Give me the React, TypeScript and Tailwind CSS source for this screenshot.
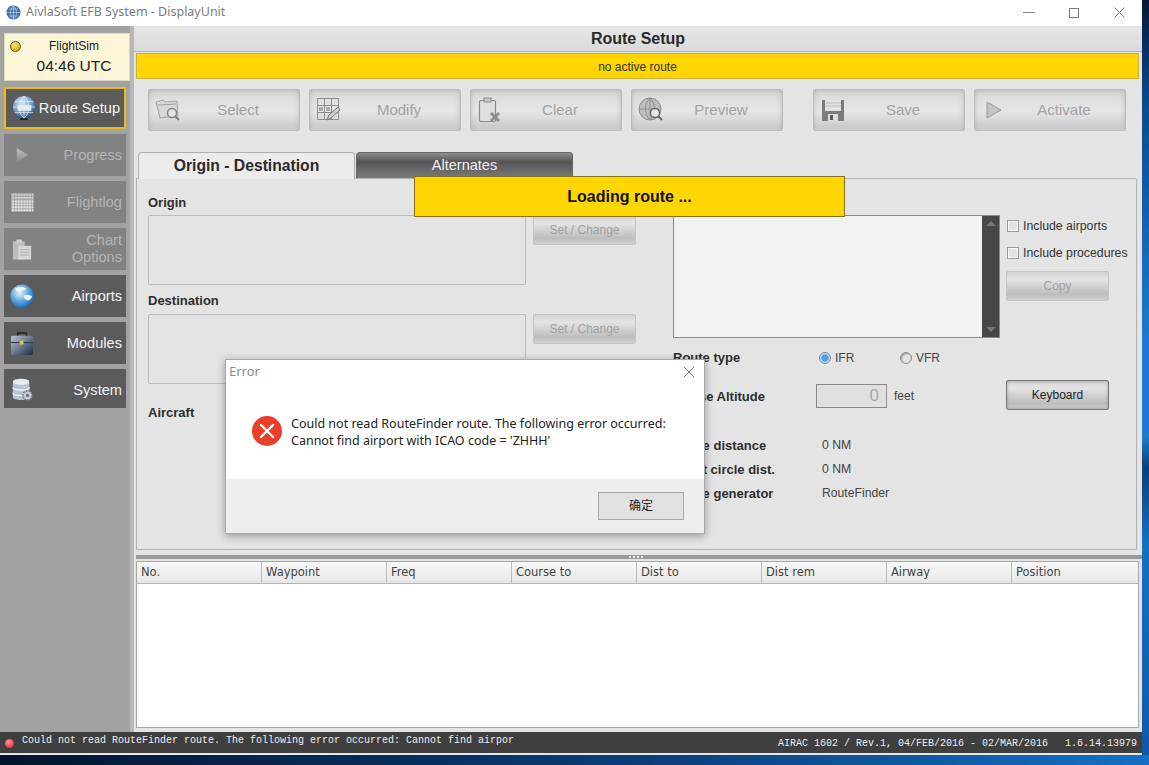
const uiFont = "[font-family:'Liberation_Sans',Arial,sans-serif]";

function RouteGlobe() {
  return (
    <svg width="24" height="26" viewBox="0 0 26 28">
      <defs>
        <radialGradient id="rg" cx="40%" cy="30%" r="75%">
          <stop offset="0" stopColor="#d8e8f5" />
          <stop offset="0.6" stopColor="#6f9cc6" />
          <stop offset="1" stopColor="#1f4a78" />
        </radialGradient>
      </defs>
      <circle cx="13" cy="13" r="12" fill="url(#rg)" />
      <path d="M1 13h24M13 1v24M3 7h20M3 19h20M13 1c-7 6-7 18 0 24M13 1c7 6 7 18 0 24" stroke="#e6eef6" strokeWidth="0.8" fill="none" />
      <rect x="6" y="11" width="15" height="6" fill="#eef3f8" opacity="0.85" />
      <rect x="9" y="25" width="8" height="2" fill="#222" />
    </svg>
  );
}

function PlayIcon() {
  return (
    <svg width="13" height="16" viewBox="0 0 16 18" preserveAspectRatio="none">
      <defs>
        <linearGradient id="pl" x1="0" y1="0" x2="0" y2="1">
          <stop offset="0" stopColor="#bdbdbd" />
          <stop offset="1" stopColor="#8c8c8c" />
        </linearGradient>
      </defs>
      <path d="M1 1l14 8-14 8z" fill="url(#pl)" />
    </svg>
  );
}

function KeysIcon() {
  return (
    <svg width="23" height="19" viewBox="0 0 24 20">
      <rect width="24" height="20" fill="#a9a9a9" />
      <path d="M1 2h22M1 5h22" stroke="#dcdcdc" strokeWidth="1.4" strokeDasharray="2 1" />
      <path d="M1 9h22M1 12h22M1 15h22M1 18h22" stroke="#e8e8e8" strokeWidth="2" strokeDasharray="2 1" />
    </svg>
  );
}

function ChartIcon() {
  return (
    <svg width="20" height="23" viewBox="0 0 22 24">
      <rect x="1" y="3" width="13" height="20" fill="#bdbdbd" />
      <rect x="7" y="8" width="14" height="15" fill="#d8d8d8" />
      <rect x="5" y="1" width="6" height="4" fill="#cfcfcf" />
      <path d="M9 12h10M9 15h10M9 18h10" stroke="#aaa" />
    </svg>
  );
}

function EarthIcon() {
  return (
    <svg width="24" height="24" viewBox="0 0 25 25">
      <defs>
        <radialGradient id="ea" cx="40%" cy="35%" r="70%">
          <stop offset="0" stopColor="#e8f4fc" />
          <stop offset="0.55" stopColor="#5ea8e2" />
          <stop offset="1" stopColor="#1865b4" />
        </radialGradient>
      </defs>
      <circle cx="12.5" cy="12.5" r="12" fill="url(#ea)" />
      <path d="M5 5c4-3 9-3 12 0-2 2-4 1-6 3-2 1-4 0-6-3zM14 12c3-1 7-1 9 1-1 3-3 4-5 4-2-1-4-3-4-5z" fill="#f2f5f2" />
    </svg>
  );
}

function CaseIcon() {
  return (
    <svg width="24" height="25" viewBox="0 0 25 26">
      <defs>
        <linearGradient id="cs" x1="0" y1="0" x2="1" y2="1">
          <stop offset="0" stopColor="#b9c4d4" />
          <stop offset="1" stopColor="#1f2c48" />
        </linearGradient>
      </defs>
      <path d="M8 5V2h9v3" stroke="#222" strokeWidth="1.5" fill="none" />
      <rect x="1" y="5" width="23" height="20" rx="2" fill="url(#cs)" />
      <path d="M1 12h23" stroke="#2a3550" />
      <rect x="10" y="10" width="4" height="4" fill="#d9c54a" />
    </svg>
  );
}

function DbIcon() {
  return (
    <svg width="22" height="24" viewBox="0 0 24 26">
      <path d="M2 4v17c0 4 18 4 18 0V4z" fill="#b7c4d2" />
      <ellipse cx="11" cy="4" rx="9" ry="3.4" fill="#e6ecf2" />
      <path d="M2 10c0 4 18 4 18 0M2 16c0 4 18 4 18 0" stroke="#f2f5f8" strokeWidth="1.4" fill="none" />
      <circle cx="18" cy="19" r="5" fill="#c5cdd6" stroke="#6d7884" strokeWidth="1.6" strokeDasharray="2 1" />
      <circle cx="18" cy="19" r="1.8" fill="#6d7884" />
    </svg>
  );
}

function FolderSearch() {
  return (
    <svg width="26" height="24" viewBox="0 0 26 24" fill="none" stroke="#a0a0a0">
      <path d="M1 4l7-2 2 2 12-1 1 15-18 2z" fill="#d8d8d8" />
      <path d="M3 7l18-1" />
      <circle cx="17" cy="15" r="4.5" fill="#e4e4e4" strokeWidth="1.4" stroke="#808080" />
      <path d="M20 18l4 4" strokeWidth="2" stroke="#808080" />
    </svg>
  );
}

function GridPencil() {
  return (
    <svg width="24" height="24" viewBox="0 0 24 24" fill="none" stroke="#8e8e8e">
      <path d="M.5.5h21v21H.5zM7.5.5v21M14.5.5v21M.5 7.5h21M.5 14.5h21" />
      <rect x="2" y="9" width="4" height="4" fill="#aaa" stroke="none" />
      <rect x="9" y="9" width="4" height="4" fill="#aaa" stroke="none" />
      <path d="M10 22l2-5 9-8 2 3-9 8z" fill="#cfcfcf" stroke="#777" />
    </svg>
  );
}

function ClipX() {
  return (
    <svg width="24" height="26" viewBox="0 0 24 26" fill="none" stroke="#8a8a8a">
      <rect x="1.5" y="3.5" width="16" height="21" rx="1.5" fill="#dedede" strokeWidth="1.2" />
      <rect x="6" y="1" width="7" height="4" fill="#c8c8c8" />
      <path d="M13 16l8 8M21 16l-8 8" stroke="#8f8f8f" strokeWidth="3" />
    </svg>
  );
}

function GlobeSearch() {
  return (
    <svg width="26" height="26" viewBox="0 0 26 26" fill="none">
      <circle cx="12" cy="12" r="11" fill="#bdbdbd" stroke="#8c8c8c" />
      <path d="M1 12h22M12 1v22M12 1c-6 6-6 16 0 22M12 1c6 6 6 16 0 22" stroke="#888" strokeWidth="0.8" />
      <circle cx="17" cy="16" r="4.5" fill="#e8e8e8" stroke="#666" strokeWidth="1.4" />
      <path d="M20 19l4 4" stroke="#666" strokeWidth="2" />
    </svg>
  );
}

function Floppy() {
  return (
    <svg width="22" height="22" viewBox="0 0 22 22">
      <path d="M0 1h22v21H0z" fill="#7c7c7c" />
      <rect x="3" y="1" width="16" height="11" fill="#e2e2e2" />
      <path d="M3 4h16M3 7h16" stroke="#bbb" />
      <rect x="6" y="15" width="10" height="7" fill="#dedede" />
      <rect x="8" y="16" width="3" height="5" fill="#555" />
    </svg>
  );
}

function PlayOutline() {
  return (
    <svg width="16" height="18" viewBox="0 0 16 18">
      <path d="M1 1l14 8-14 8z" fill="#c4c4c4" stroke="#9a9a9a" />
    </svg>
  );
}

function NavItem({ icon, label, enabled, active, h = "h-[42px]", extra = "" }: { icon: React.ReactNode; label: React.ReactNode; enabled?: boolean; active?: boolean; h?: string; extra?: string }) {
  return (
    <div className={`${h} w-[122px] flex items-center justify-between pl-[6px] pr-[4px] text-[14.6px] leading-[17px] text-right ${enabled ? "bg-[#5b5b5b] text-[#f4f4f4]" : "bg-[#828282] text-[#b4b4b4]"} ${active ? "border-[2px] border-[#e6bb1e] pl-[4px] pr-[2px]" : ""} ${extra}`}>
      <div className="w-[24px] flex justify-center">{icon}</div>
      <div className="whitespace-nowrap">{label}</div>
    </div>
  );
}

function Sidebar() {
  return (
    <div className="w-[134px] shrink-0 bg-[#a2a2a2] pl-[4px] pt-[7px] flex flex-col gap-[5px] border-r-[4px] border-[#b8b8b8]">
      <div className="relative h-[48px] w-[126px] bg-[#fdf5d8] mb-[1px] flex flex-col items-center pl-[14px] text-[#222] border border-[#dcd7c0]">
        <div className="absolute left-[5px] top-[7px] w-[11px] h-[11px] rounded-full bg-[radial-gradient(circle_at_40%_35%,#f8e870,#b89a10)] border border-[#6b5a10]" />
        <div className="text-[12px] leading-[14px] mt-[5px]">FlightSim</div>
        <div className="text-[15.5px] leading-[20px] mt-[3px]">04:46 UTC</div>
      </div>
      <NavItem icon={<RouteGlobe />} label="Route Setup" enabled active />
      <NavItem icon={<PlayIcon />} label="Progress" />
      <NavItem icon={<KeysIcon />} label="Flightlog" />
      <NavItem icon={<ChartIcon />} label={<>Chart<br />Options</>} />
      <NavItem icon={<EarthIcon />} label="Airports" enabled />
      <NavItem icon={<CaseIcon />} label="Modules" enabled />
      <NavItem icon={<DbIcon />} label="System" enabled h="h-[39px]" extra="pt-[3px]" />
    </div>
  );
}

function ToolButton({ icon, label }: { icon: React.ReactNode; label: string }) {
  return (
    <div className="w-[152px] h-[42px] flex items-center pl-[6px] rounded-[2px] border border-[#bcbcbc] bg-[linear-gradient(180deg,#d2d2d2_0%,#dedede_20%,#e6e6e6_50%,#dcdcdc_70%,#cecece_90%,#dadada_100%)] shadow-[inset_0_0_5px_rgba(140,140,140,0.45)]">
      <div className="w-[26px] flex justify-center">{icon}</div>
      <div className="flex-1 text-center pr-[4px] text-[15px] text-[#a2a2a2]">{label}</div>
    </div>
  );
}

function SmallButton({ label, dark, className = "" }: { label: string; dark?: boolean; className?: string }) {
  return (
    <div className={`w-[103px] h-[30px] flex items-center justify-center rounded-[2px] text-[12px] bg-[linear-gradient(180deg,#d2d2d2_0%,#e4e4e4_25%,#bdbdbd_80%,#cfcfcf_100%)] ${dark ? "border border-[#777] text-[#222] shadow-[inset_0_0_3px_rgba(90,90,90,0.5)]" : "border border-[#c4c4c4] text-[#a2a2a2]"} ${className}`}>
      {label}
    </div>
  );
}

function Check({ label }: { label: string }) {
  return (
    <div className="flex items-center gap-[4px] text-[12.3px] text-[#333] h-[14px]">
      <div className="w-[12px] h-[12px] border border-[#9a9a9a] bg-[#e2e2e2] shadow-[inset_0_0_0_1px_#f6f6f6]" />
      <span className="whitespace-nowrap">{label}</span>
    </div>
  );
}

function Radio({ label, on }: { label: string; on?: boolean }) {
  return (
    <div className="flex items-center gap-[4px] text-[12px] text-[#444]">
      <div className={`w-[12px] h-[12px] rounded-full border border-[#888] ${on ? "bg-[radial-gradient(circle,#4aa3e8_45%,#bcdcf5_60%)]" : "bg-[#e2e2e2] shadow-[inset_1px_1px_1px_#999]"}`} />
      <span>{label}</span>
    </div>
  );
}

function Label({ children, className = "" }: { children: React.ReactNode; className?: string }) {
  return <div className={`text-[13px] leading-[16px] font-bold text-[#2e2e2e] pt-[1px] -mb-[1px] ${className}`}>{children}</div>;
}

function InfoRow({ label, value }: { label: string; value: string }) {
  return (
    <div className="flex items-center h-[24px]">
      <Label className="w-[149px]">{label}</Label>
      <div className="text-[12.2px] text-[#444]">{value}</div>
    </div>
  );
}

function RoutePanel() {
  return (
    <div className="h-[372px] ml-[2px] mr-[5px] border border-[#b0b0b0] bg-[#e4e4e4] rounded-tr-[2px] flex pl-[11px] pr-[8px]">
      <div className="w-[488px] shrink-0 pt-[15px]">
        <Label>Origin</Label>
        <div className="flex gap-[7px] mt-[5px]">
          <div className="w-[378px] h-[70px] border border-[#bcbcbc] rounded-[2px]" />
          <SmallButton label="Set / Change" />
        </div>
        <Label className="mt-[7px]">Destination</Label>
        <div className="flex gap-[7px] mt-[6px]">
          <div className="w-[378px] h-[70px] border border-[#bcbcbc] rounded-[2px]" />
          <SmallButton label="Set / Change" />
        </div>
        <Label className="mt-[20px]">Aircraft</Label>
      </div>
      <div className="w-[37px] shrink-0" />
      <div className="flex-1 pt-[36px]">
        <div className="flex gap-[7px]">
          <div className="w-[327px] h-[123px] border border-[#8a8a8a] bg-[#f2f2f2] flex justify-end">
            <div className="w-[17px] bg-[#464646] flex flex-col justify-between items-center py-[5px] text-[#6e6e6e]">
              <div className="w-0 h-0 border-x-[5px] border-x-transparent border-b-[5px] border-b-[#777]" />
              <div className="w-0 h-0 border-x-[5px] border-x-transparent border-t-[5px] border-t-[#777]" />
            </div>
          </div>
          <div className="pt-[4px]">
            <Check label="Include airports" />
            <div className="mt-[13px]"><Check label="Include procedures" /></div>
            <SmallButton label="Copy" className="mt-[11px] -ml-px" />
          </div>
        </div>
        <div className="flex items-center mt-[12px] h-[16px]">
          <Label className="w-[146px] -mt-[2px]">Route type</Label>
          <div className="w-[81px]"><Radio label="IFR" on /></div>
          <Radio label="VFR" />
        </div>
        <div className="flex items-center mt-[18px] h-[24px]">
          <Label className="w-[143px]">Cruise Altitude</Label>
          <div className="w-[71px] h-[24px] border border-[#8a8a8a] bg-[#e0e0e0] flex items-center justify-end pr-[7px] text-[17px] text-[#a8a8a8]">0</div>
          <div className="ml-[7px] text-[12px] text-[#444]">feet</div>
          <SmallButton label="Keyboard" dark className="ml-[92px] -mt-[2px]" />
        </div>
        <div className="mt-[25px]">
          <InfoRow label="Route distance" value="0 NM" />
          <InfoRow label="Great circle dist." value="0 NM" />
          <InfoRow label="Route generator" value="RouteFinder" />
        </div>
      </div>
    </div>
  );
}

function RouteTable() {
  const cols = ["No.", "Waypoint", "Freq", "Course to", "Dist to", "Dist rem", "Airway", "Position"];
  return (
    <div className="flex-1 ml-[2px] mr-[3px] mb-[4px] border border-[#a8a8a8] bg-white flex flex-col">
      <div className="h-[22px] flex border-b border-[#b4b4b4] bg-[linear-gradient(180deg,#f8f8f8,#e6e6e6)] text-[11.5px] text-[#444] [font-family:'DejaVu_Sans',Tahoma,sans-serif]">
        {cols.map((c) => (
          <div key={c} className="w-[125px] last:flex-1 flex items-center pl-[4px] border-r border-[#bcbcbc] last:border-r-0">{c}</div>
        ))}
      </div>
    </div>
  );
}

function ErrorDialog() {
  return (
    <div className="absolute left-[225px] top-[359px] w-[480px] h-[175px] bg-white border border-[#a8a8a8] shadow-[0_2px_8px_rgba(0,0,0,0.35)] flex flex-col [font-family:'Noto_Sans','Noto_Sans_CJK_SC',sans-serif]">
      <div className="flex-1 relative">
        <div className="absolute left-[3px] top-[2px] text-[13px] leading-[18px] text-[#8c8c8c]">Error</div>
        <svg className="absolute right-[9px] top-[6px]" width="12" height="12" viewBox="0 0 12 12" stroke="#777" strokeWidth="1">
          <path d="M1 1l10 10M11 1L1 11" />
        </svg>
        <div className="absolute left-[26px] top-[56px] w-[30px] h-[30px] rounded-full bg-[#e8402a] flex items-center justify-center">
          <svg width="16" height="16" viewBox="0 0 16 16" stroke="white" strokeWidth="2.4" strokeLinecap="round">
            <path d="M2 2l12 12M14 2L2 14" />
          </svg>
        </div>
        <div className="absolute left-[65px] top-[55px] text-[12.5px] leading-[17px] text-[#222] whitespace-nowrap">
          Could not read RouteFinder route. The following error occurred:<br />
          Cannot find airport with ICAO code = 'ZHHH'
        </div>
      </div>
      <div className="h-[54px] bg-[#eeeeee] flex items-center justify-end pr-[20px]">
        <div className="w-[86px] h-[28px] border border-[#a8a8a8] bg-[#e1e1e1] flex items-center justify-center text-[12px] text-[#222]">确定</div>
      </div>
    </div>
  );
}

export default function App() {
  return (
    <div className={`relative w-[1149px] h-[765px] overflow-hidden flex flex-col bg-[linear-gradient(90deg,#03142e_0%,#0a3d78_55%,#1470c4_100%)] ${uiFont}`}>
      <div className="flex h-[755px] shrink-0">
        <div className="w-[1142px] flex flex-col bg-white">
          {/* Title bar */}
          <div className="h-[26px] shrink-0 flex items-center pl-[6px] pb-[1px] text-[12.5px] text-[#7c7c7c] [font-family:'Noto_Sans',sans-serif]">
            <svg width="15" height="15" viewBox="0 0 15 15">
              <circle cx="7.5" cy="7.5" r="7" fill="#3e6ea6" />
              <path d="M1 7.5h13M7.5 1v13M3 4h9M3 11h9M7.5 1c-4 3-4 10 0 13M7.5 1c4 3 4 10 0 13" stroke="#cfe0ee" strokeWidth="0.6" fill="none" />
            </svg>
            <span className="ml-[5px]">AivlaSoft EFB System - DisplayUnit</span>
            <div className="ml-auto flex items-center gap-[35px] pr-[17px]">
              <div className="w-[12px] h-px bg-[#8a8a8a]" />
              <div className="w-[10px] h-[10px] border border-[#7a7a7a] -ml-[1px]" />
              <svg width="11" height="11" viewBox="0 0 11 11" stroke="#7a7a7a"><path d="M.5.5l10 10M10.5.5l-10 10" /></svg>
            </div>
          </div>

          <div className="flex-1 flex min-h-0">
            <Sidebar />
            <div className="flex-1 flex flex-col bg-[#e4e4e4] min-w-0">
              <div className="h-[26px] shrink-0 flex items-center justify-center text-[16px] font-bold text-[#2a2a2a] bg-[linear-gradient(180deg,#e6e6e6,#dadada)] border-b border-[#b4b4b4]">Route Setup</div>
              <div className="h-[26px] shrink-0 mt-[1px] ml-[2px] mr-[3px] flex items-center justify-center pt-[1px] bg-[#ffd602] text-[12px] text-[#333] border border-[#cdb23a]">no active route</div>
              {/* Toolbar */}
              <div className="flex h-[42px] shrink-0 mt-[10px] pl-[14px] gap-[9px]">
                <ToolButton icon={<FolderSearch />} label="Select" />
                <ToolButton icon={<GridPencil />} label="Modify" />
                <ToolButton icon={<ClipX />} label="Clear" />
                <ToolButton icon={<GlobeSearch />} label="Preview" />
                <div className="w-[12px]" />
                <ToolButton icon={<Floppy />} label="Save" />
                <ToolButton icon={<PlayOutline />} label="Activate" />
              </div>
              {/* Tabs */}
              <div className="flex h-[26px] shrink-0 mt-[21px] pl-[4px] gap-px">
                <div className="w-[217px] h-[27px] z-10 flex items-center justify-center border border-[#b0b0b0] border-b-0 rounded-t-[4px] bg-[#ececec] text-[15.7px] font-bold text-[#2a2a2a]">Origin - Destination</div>
                <div className="w-[217px] flex items-center justify-center rounded-t-[4px] border border-[#666] border-b-0 text-[14.5px] text-[#f0f0f0] bg-[linear-gradient(180deg,#8e8e8e_0%,#555_35%,#7a7a7a_100%)]">Alternates</div>
              </div>
              <RoutePanel />
              {/* Splitter */}
              <div className="h-[11px] shrink-0 bg-[#e4e4e4] pt-[5px]">
                <div className="h-[4px] bg-[#9a9a9a] flex justify-center items-center ml-[2px]">
                  <div className="w-[14px] border-t-[2px] border-dotted border-[#e8e8e8] ml-[-6px]" />
                </div>
              </div>
              <RouteTable />
            </div>
          </div>

          {/* Status bar */}
          <div className="h-[23px] shrink-0 flex items-center bg-[#3f3f3f] text-[10px] text-[#eeeeee] pl-[5px] pr-[5px] border-b-[2px] border-[#e8e8e8] [font-family:'Liberation_Mono',monospace]">
            <div className="w-[9px] h-[9px] rounded-full mt-[2px] bg-[radial-gradient(circle_at_40%_35%,#ff9a9a,#d8101c)]" />
            <span className="ml-[8px] pb-[5px]">Could not read RouteFinder route. The following error occurred: Cannot find airpor</span>
            <span className="ml-auto pt-[2px]">AIRAC 1602 / Rev.1, 04/FEB/2016 - 02/MAR/2016</span>
            <span className="ml-[17px] pt-[2px]">1.6.14.13979</span>
          </div>
        </div>
        {/* Desktop showing past the window edge */}
        <div className="flex-1 bg-[linear-gradient(180deg,#061a38_0%,#0b4a8e_14%,#1a7bd0_45%,#1a7bd0_58%,#0c3f78_62%,#1670c0_72%,#0f5aa6_100%)]" />
      </div>

      {/* Loading overlay */}
      <div className="absolute left-[414px] top-[176px] w-[431px] h-[41px] bg-[#ffd602] border border-[#86701a] flex items-center justify-center text-[16px] font-bold text-[#111]">Loading route ...</div>
      <ErrorDialog />
    </div>
  );
}
